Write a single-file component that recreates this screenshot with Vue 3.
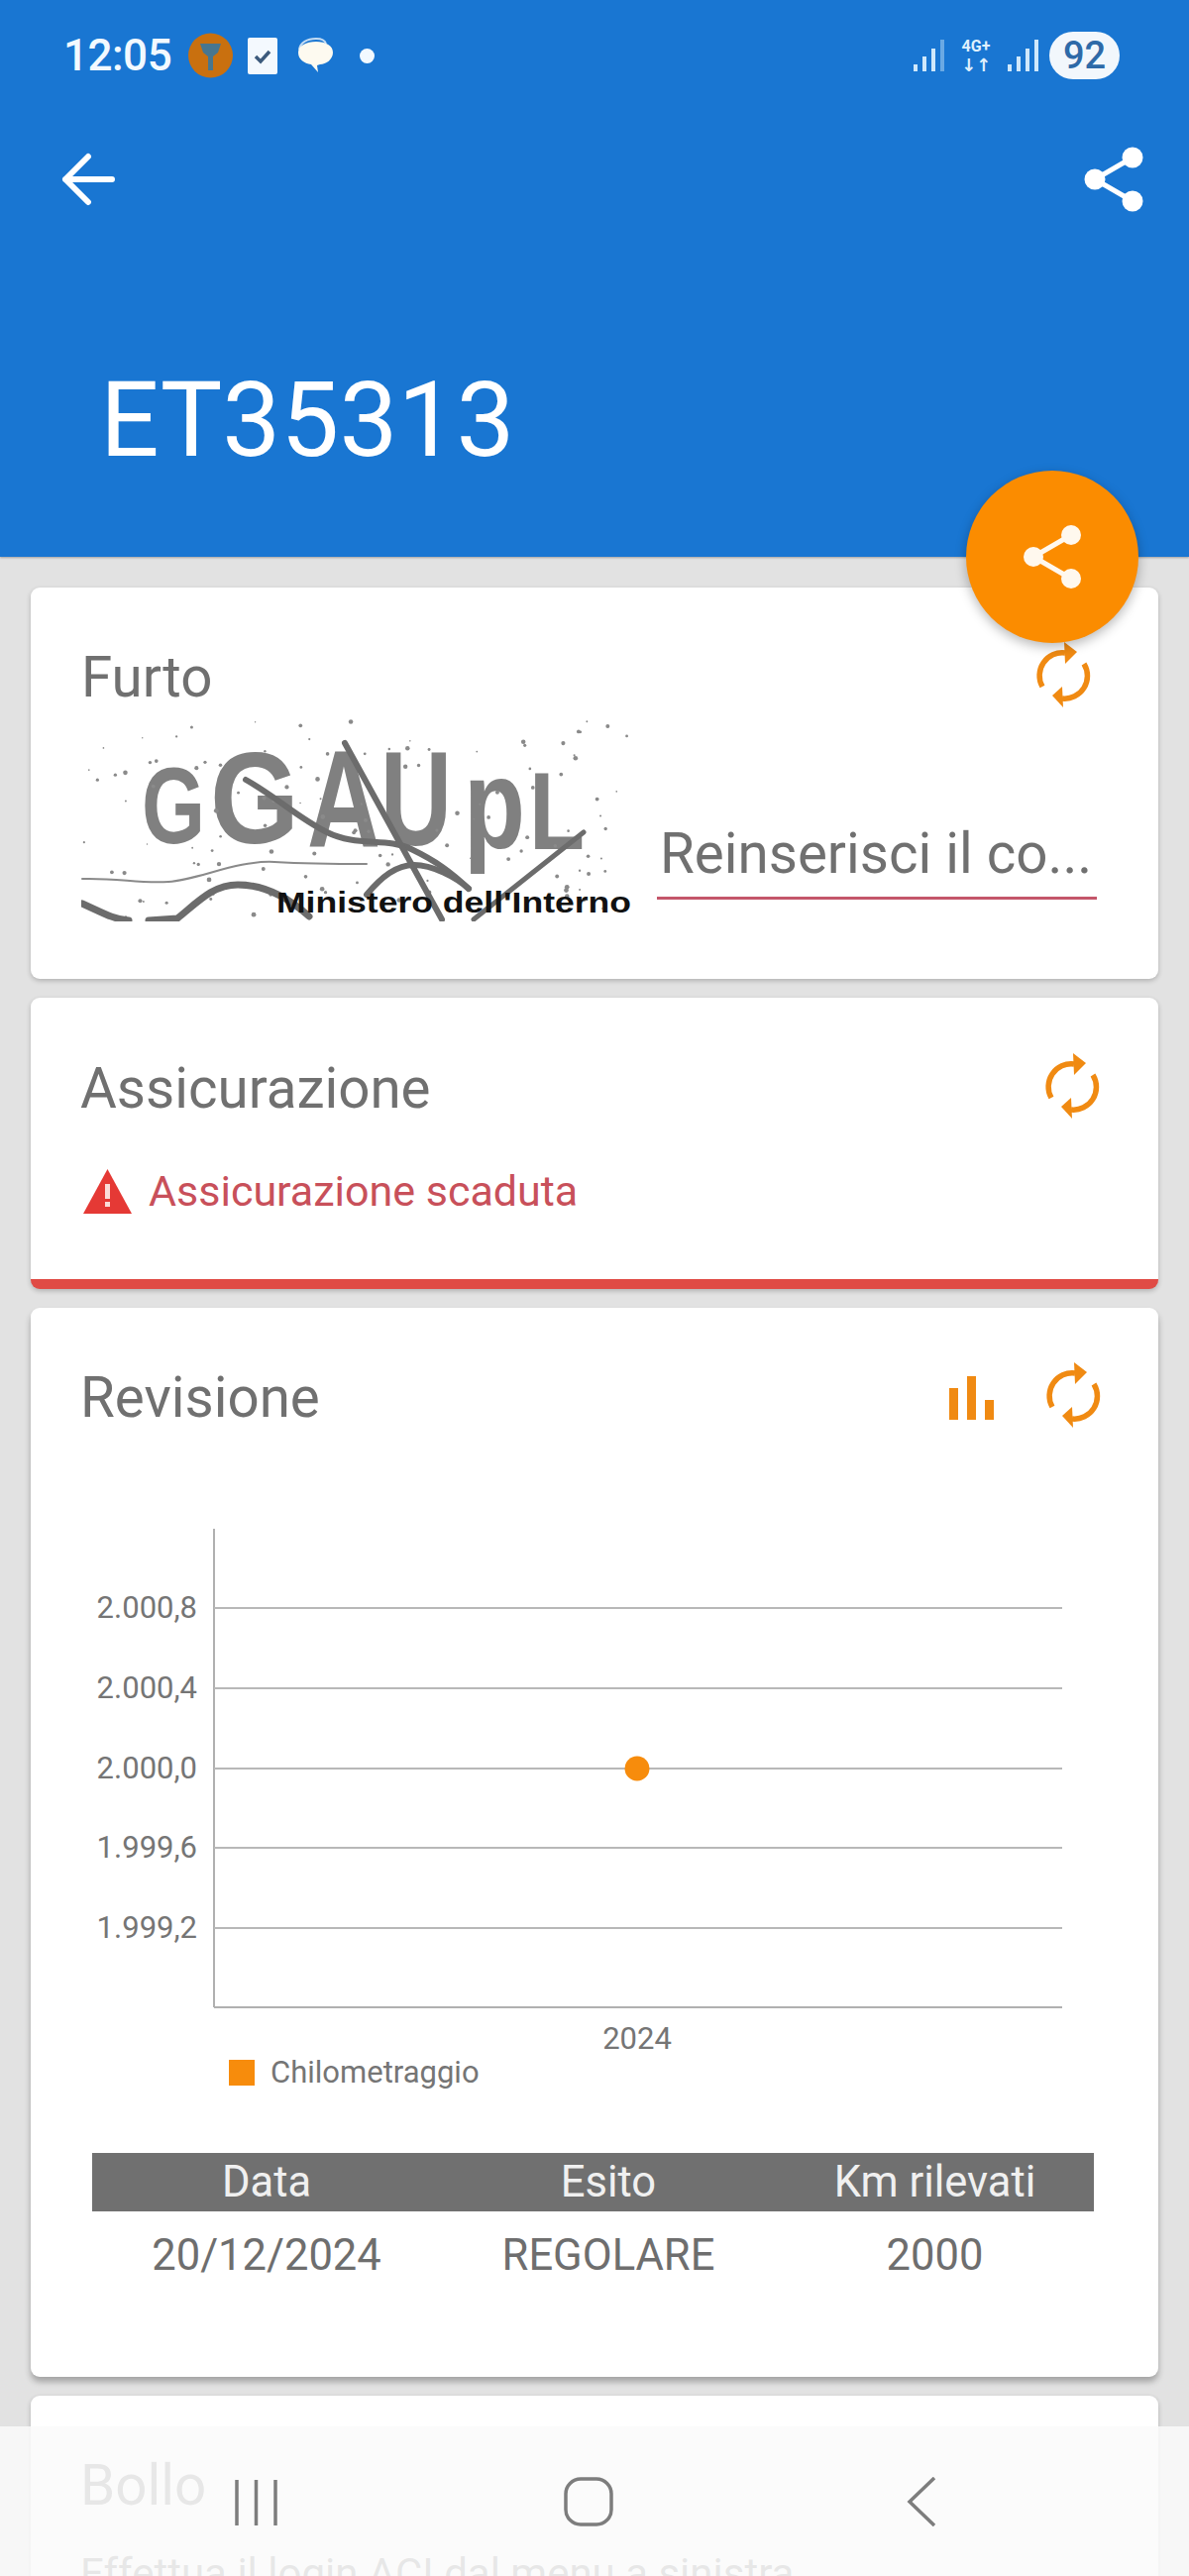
<script setup>
// grid lines of the km chart, y in page pixels
const gridLines = [
  { y: 1624, label: '2.000,8' },
  { y: 1705, label: '2.000,4' },
  { y: 1786, label: '2.000,0' },
  { y: 1866, label: '1.999,6' },
  { y: 1947, label: '1.999,2' },
]

const signalBars = [
  { x: 0, h: 7 },
  { x: 9, h: 15 },
  { x: 18, h: 23 },
  { x: 27, h: 32 },
]

const captchaLetters = [
  { ch: 'G', x: 143, y: 851, size: 110, w: 64 },
  { ch: 'G', x: 212, y: 851, size: 132, w: 90 },
  { ch: 'A', x: 310, y: 855, size: 140, w: 74 },
  { ch: 'U', x: 384, y: 853, size: 136, w: 72 },
  { ch: 'p', x: 468, y: 855, size: 128, w: 62 },
  { ch: 'L', x: 534, y: 857, size: 111, w: 56 },
]

// noise of the captcha, seeded so it is the same on every load
let seed = 7
function rnd() {
  seed = (seed * 16807) % 2147483647
  return seed / 2147483647
}
const captchaDots = Array.from({ length: 130 }, () => ({
  x: 84 + rnd() * 552,
  y: 728 + rnd() * 198,
  r: 0.7 + rnd() * 1.7,
}))

const rows = [{ data: '20/12/2024', esito: 'REGOLARE', km: '2000' }]
</script>

<template>
  <div class="page">
    <header class="appbar">
      <div class="status">
        <span class="time">12:05</span>
        <svg class="st-key" width="45" height="46" viewBox="0 0 45 46">
          <circle cx="22.5" cy="23" r="22.5" fill="#c9700f" />
          <path d="M12 11h21l-3 9-5 4v14h-5V24l-5-4z" fill="#47768f" />
        </svg>
        <svg class="st-check" width="30" height="37" viewBox="0 0 30 37">
          <rect width="30" height="37" rx="2" fill="#f4f9fe" />
          <path d="M8 19l5 5 9-10" fill="none" stroke="#3c5a7c" stroke-width="3.5" />
        </svg>
        <svg class="st-chat" width="37" height="36" viewBox="0 0 37 36">
          <path d="M3 12C4 5 11 1 20 1c6 0 9 2 10 5" fill="none" stroke="#c4dcf3" stroke-width="2" />
          <path d="M2 15C2 8 10 4 20 4s17 4 17 11-7 12-13 12l-3 1 1 7-7-8C8 26 2 22 2 15z" fill="#fdfaf0" />
        </svg>
        <span class="st-dot"></span>
        <div class="status-right">
          <svg width="31" height="32" viewBox="0 0 31 32">
            <rect
              v-for="(bar, i) in signalBars"
              :key="bar.x"
              :x="bar.x"
              :y="32 - bar.h"
              width="4"
              :height="bar.h"
              fill="#cfe8fb"
              :opacity="i === 3 ? 0.45 : 1"
            />
          </svg>
          <div class="net">
            <span>4G+</span>
            <span class="net-arrows">↓↑</span>
          </div>
          <svg width="31" height="32" viewBox="0 0 31 32">
            <rect
              v-for="bar in signalBars"
              :key="bar.x"
              :x="bar.x"
              :y="32 - bar.h"
              width="4"
              :height="bar.h"
              fill="#cfe8fb"
            />
          </svg>
          <span class="battery">92</span>
        </div>
      </div>

      <div class="toolbar">
        <svg width="54" height="54" viewBox="0 0 54 54">
          <path d="M4 27h47M27 4L4 27l23 23" fill="none" stroke="#fff" stroke-width="6" stroke-linecap="round" stroke-linejoin="round" />
        </svg>
        <svg width="60" height="66" viewBox="0 0 60 66">
          <path d="M49 11L11 33l38 22" fill="none" stroke="#fff" stroke-width="5" />
          <circle cx="49" cy="11" r="10.5" fill="#fff" />
          <circle cx="11" cy="33" r="10.5" fill="#fff" />
          <circle cx="49" cy="55" r="10.5" fill="#fff" />
        </svg>
      </div>

      <h1 class="plate">ET35313</h1>
    </header>

    <button class="fab">
      <svg width="60" height="66" viewBox="0 0 60 66">
        <path d="M49 11L11 33l38 22" fill="none" stroke="#fff8ee" stroke-width="5" />
        <circle cx="49" cy="11" r="10" fill="#fff8ee" />
        <circle cx="11" cy="33" r="10" fill="#fff8ee" />
        <circle cx="49" cy="55" r="10" fill="#fff8ee" />
      </svg>
    </button>

    <main class="cards">
      <section class="card card-furto">
        <div class="card-head">
          <h2>Furto</h2>
          <svg class="sync" viewBox="-30 -38 60 76">
            <path d="M-21 11A23 23 0 0 1 2-23M21-12A23 23 0 0 1-1 23" />
            <polygon points="1,-34 14,-24 2,-12" />
            <polygon points="-11,20 -1,11 0,32" />
          </svg>
        </div>
        <div class="captcha-row">
          <svg class="captcha" viewBox="82 725 558 205" width="558" height="205">
            <text
              v-for="(l, i) in captchaLetters"
              :key="i"
              :x="l.x"
              :y="l.y"
              :font-size="l.size"
              :textLength="l.w"
              lengthAdjust="spacingAndGlyphs"
              class="captcha-letter"
            >{{ l.ch }}</text>
            <circle v-for="(d, i) in captchaDots" :key="i" :cx="d.x" :cy="d.y" :r="d.r" fill="#8a8a8a" />
            <g fill="none" stroke="#6c6c6c" stroke-linecap="round">
              <path d="M248 787C280 805 300 825 330 840S390 845 415 857 455 880 473 897" stroke-width="6" />
              <path d="M348 750L446 928" stroke-width="6" />
              <path d="M589 840L478 928" stroke-width="5" />
              <path d="M83 887C120 886 140 892 170 890S240 868 277 870 340 872 370 872" stroke-width="2" stroke="#8a8a8a" />
              <path d="M83 912C105 922 115 928 130 929M150 929L179 927C200 910 215 893 240 893S290 905 312 925" stroke-width="7" />
              <path d="M370 903C385 885 400 873 418 873S460 885 473 897" stroke-width="6" />
            </g>
            <text x="279" y="921" font-size="30" textLength="358" lengthAdjust="spacingAndGlyphs" class="captcha-caption">Ministero dell'Interno</text>
          </svg>
          <div class="captcha-input">Reinserisci il co...</div>
        </div>
      </section>

      <section class="card card-assic">
        <div class="card-head">
          <h2>Assicurazione</h2>
          <svg class="sync" viewBox="-30 -38 60 76">
            <path d="M-21 11A23 23 0 0 1 2-23M21-12A23 23 0 0 1-1 23" />
            <polygon points="1,-34 14,-24 2,-12" />
            <polygon points="-11,20 -1,11 0,32" />
          </svg>
        </div>
        <div class="alert">
          <svg width="49" height="45" viewBox="0 0 49 45">
            <path d="M24.5 0L49 45H0z" fill="#e53935" />
            <rect x="22" y="15" width="5" height="15" fill="#fbdcd8" />
            <rect x="22" y="33" width="5" height="5" fill="#fbdcd8" />
          </svg>
          <span>Assicurazione scaduta</span>
        </div>
      </section>

      <section class="card card-rev">
        <div class="card-head">
          <h2>Revisione</h2>
          <div class="head-actions">
            <svg width="45" height="44" viewBox="0 0 45 44" fill="#f08a12">
              <rect x="0" y="12" width="9" height="32" />
              <rect x="18" y="0" width="9" height="44" />
              <rect x="36" y="24" width="9" height="20" />
            </svg>
            <svg class="sync" viewBox="-30 -38 60 76">
              <path d="M-21 11A23 23 0 0 1 2-23M21-12A23 23 0 0 1-1 23" />
              <polygon points="1,-34 14,-24 2,-12" />
              <polygon points="-11,20 -1,11 0,32" />
            </svg>
          </div>
        </div>

        <svg class="chart" viewBox="31 1530 1138 590" width="1138" height="590">
          <line x1="216" y1="1544" x2="216" y2="2027" stroke="#b0b0b0" stroke-width="2" />
          <line x1="216" y1="2027" x2="1072" y2="2027" stroke="#b0b0b0" stroke-width="2" />
          <g v-for="line in gridLines" :key="line.y">
            <line x1="216" :y1="line.y" x2="1072" :y2="line.y" stroke="#b8b8b8" stroke-width="2" />
            <text x="199" :y="line.y + 10" text-anchor="end" class="chart-text">{{ line.label }}</text>
          </g>
          <circle cx="643" cy="1786" r="12.5" fill="#f78c0c" />
          <text x="643" y="2069" text-anchor="middle" class="chart-text">2024</text>
          <rect x="231" y="2080" width="26" height="26" fill="#f78c0c" />
          <text x="273" y="2103" class="chart-text">Chilometraggio</text>
        </svg>

        <table class="history">
          <thead>
            <tr>
              <th class="col-data">Data</th>
              <th class="col-esito">Esito</th>
              <th>Km rilevati</th>
            </tr>
          </thead>
          <tbody>
            <tr v-for="row in rows" :key="row.data">
              <td>{{ row.data }}</td>
              <td>{{ row.esito }}</td>
              <td>{{ row.km }}</td>
            </tr>
          </tbody>
        </table>
      </section>

      <section class="card card-bollo">
        <h2>Bollo</h2>
        <p>Effettua il login ACI dal menu a sinistra</p>
      </section>
    </main>

    <nav class="navbar">
      <svg class="nav-recent" width="43" height="46" viewBox="0 0 43 46">
        <path d="M2 0v46M21.5 0v46M41 0v46" fill="none" stroke="#7d7d7d" stroke-width="3.5" />
      </svg>
      <svg width="50" height="50" viewBox="0 0 50 50">
        <rect x="2" y="2" width="46" height="46" rx="15" fill="none" stroke="#7d7d7d" stroke-width="3.5" />
      </svg>
      <svg width="30" height="50" viewBox="0 0 30 50">
        <path d="M28 1L3 25l25 24" fill="none" stroke="#7d7d7d" stroke-width="3.5" />
      </svg>
    </nav>
  </div>
</template>

<style scoped>
.page {
  position: relative;
  width: 1200px;
  height: 2600px;
  overflow: hidden;
  background: #e2e2e2;
  font-family: Roboto, "Liberation Sans", sans-serif;
  color: #707070;
}

.appbar {
  height: 562px;
  box-sizing: border-box;
  background: #1976d2;
  padding-top: 32px;
  box-shadow: 0 1px 2px rgba(0, 0, 0, 0.3);
}

.status {
  display: flex;
  align-items: center;
  height: 48px;
  padding: 0 70px 0 64px;
  color: #fff;
}

.time {
  font-size: 44px;
  font-weight: 500;
  letter-spacing: -0.5px;
  margin-right: 17px;
  color: #f2f9ff;
}

.st-check {
  margin-left: 15px;
}

.st-chat {
  margin-left: 19px;
}

.st-dot {
  width: 15px;
  height: 15px;
  margin-left: 27px;
  border-radius: 50%;
  background: #f2f9ff;
}

.status-right {
  display: flex;
  align-items: center;
  gap: 13px;
  margin-left: auto;
}

.net {
  display: flex;
  flex-direction: column;
  align-items: center;
  width: 38px;
  font-family: Roboto, "DejaVu Sans", sans-serif;
  font-size: 16px;
  font-weight: 700;
  line-height: 19px;
  color: #dff0fd;
}

.net-arrows {
  font-size: 18px;
  line-height: 20px;
}

.battery {
  width: 71px;
  height: 48px;
  margin-left: -2px;
  border-radius: 24px;
  background: #f2f7fc;
  color: #2e6aa8;
  font-size: 38px;
  font-weight: 500;
  line-height: 48px;
  text-align: center;
}

.toolbar {
  display: flex;
  align-items: center;
  justify-content: space-between;
  height: 66px;
  margin-top: 68px;
  padding: 0 46px 0 62px;
}

.plate {
  margin: 151px 0 0 101px;
  color: #fff;
  font-size: 105px;
  font-weight: 400;
  line-height: 120px;
}

.fab {
  position: absolute;
  top: 475px;
  left: 975px;
  z-index: 2;
  display: flex;
  align-items: center;
  justify-content: center;
  width: 174px;
  height: 174px;
  padding: 0;
  border: none;
  border-radius: 50%;
  background: #fb8c00;
  box-shadow: 0 4px 12px rgba(0, 0, 0, 0.28);
}

.cards {
  display: flex;
  flex-direction: column;
  gap: 19px;
  padding: 31px 31px 0;
}

.card {
  box-sizing: border-box;
  background: #fff;
  border-radius: 9px;
  box-shadow: 0 2px 5px rgba(0, 0, 0, 0.22);
}

.card h2 {
  margin: 0;
  font-size: 56.5px;
  font-weight: 400;
  line-height: 66px;
}

.card-head {
  display: flex;
  align-items: center;
  justify-content: space-between;
  height: 66px;
}

.sync {
  flex-shrink: 0;
  width: 60px;
  height: 76px;
  margin-top: -4px;
}

.sync path {
  fill: none;
  stroke: #f08a12;
  stroke-width: 5.5;
}

.sync polygon {
  fill: #f08a12;
}

.card-furto {
  height: 395px;
  padding: 58px 66px 0 51px;
}

.captcha-row {
  display: flex;
  margin-top: 8px;
}

.captcha {
  flex-shrink: 0;
}

.captcha-letter {
  fill: #808080;
  font-family: "Liberation Sans", sans-serif;
  font-weight: 700;
}

.captcha-caption {
  fill: #111;
  font-family: "Liberation Sans", sans-serif;
  font-weight: 700;
}

.captcha-input {
  flex-shrink: 0;
  width: 441px;
  height: 76px;
  margin: 104px 0 0 23px;
  border-bottom: 3px solid #c4566a;
  padding-left: 3px;
  font-size: 56.5px;
  line-height: 66px;
  box-sizing: content-box;
  white-space: nowrap;
}

.card-assic {
  height: 294px;
  padding: 59px 57px 0 50px;
  border-bottom: 10px solid #e04b45;
}

.alert {
  display: flex;
  align-items: center;
  gap: 17px;
  height: 60px;
  margin: 40px 0 0 3px;
  color: #c8505a;
  font-size: 43px;
}

.card-rev {
  height: 1079px;
  padding-top: 58px;
  box-shadow: 0 5px 6px rgba(0, 0, 0, 0.28);
}

.card-rev .card-head {
  padding: 0 56px 0 50px;
}

.head-actions {
  display: flex;
  align-items: center;
  gap: 50px;
}

.chart {
  display: block;
  margin-top: 85px;
}

.chart-text {
  fill: #757575;
  font-size: 31px;
}

.history {
  width: 1011px;
  margin: 54px 0 0 62px;
  border-collapse: collapse;
  table-layout: fixed;
  font-size: 43.5px;
}

.history th {
  height: 59px;
  padding: 0;
  background: #707070;
  color: #f0f0f0;
  font-weight: 400;
}

.history td {
  height: 88px;
  padding: 0;
  color: #6e6e6e;
  text-align: center;
}

.col-data {
  width: 352px;
}

.col-esito {
  width: 338px;
}

.card-bollo {
  height: 300px;
  padding: 58px 50px 0;
}

.card-bollo p {
  margin: 31px 0 0;
  font-size: 42px;
  white-space: nowrap;
}

.navbar {
  position: absolute;
  left: 0;
  right: 0;
  bottom: 0;
  z-index: 3;
  display: grid;
  grid-template-columns: repeat(3, 336px);
  justify-items: center;
  align-items: start;
  height: 151px;
  box-sizing: border-box;
  padding: 51px 0 0 90px;
  background: rgba(250, 250, 250, 0.86);
}

.nav-recent {
  margin-top: 3px;
}
</style>
